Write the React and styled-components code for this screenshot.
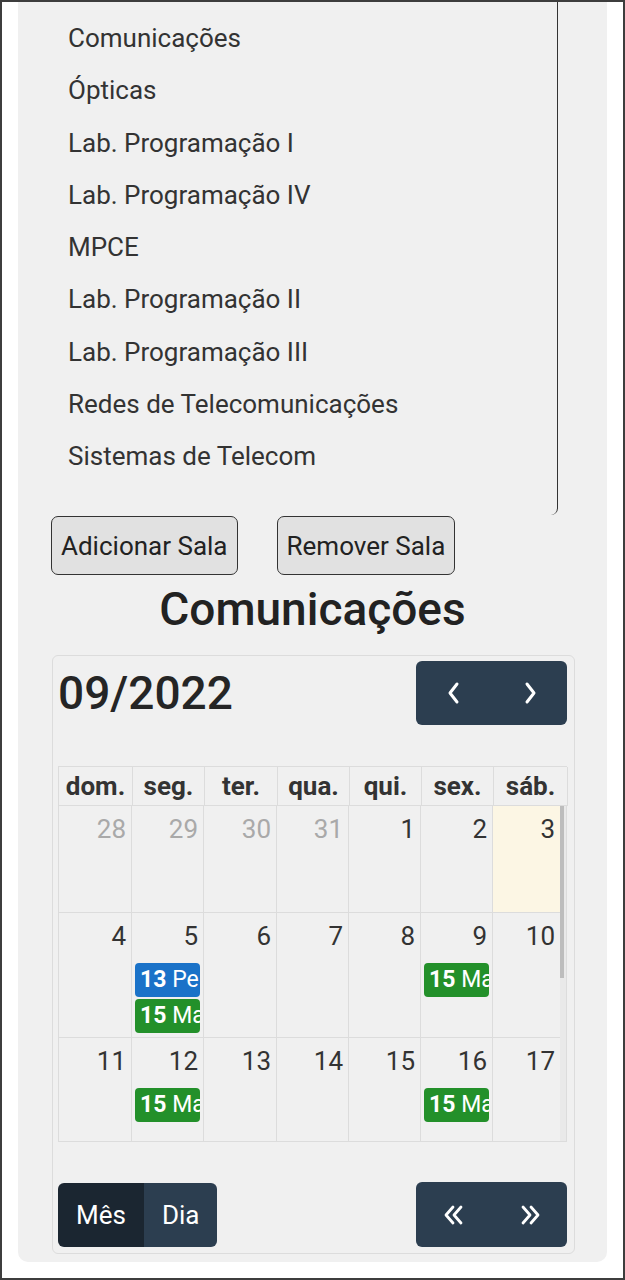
import React from "react";
import styled, { createGlobalStyle } from "styled-components";

const GlobalStyle = createGlobalStyle`
  html, body { margin: 0; padding: 0; background: #ffffff; }
  body { font-family: Roboto, "Noto Sans", "Liberation Sans", sans-serif; }
  * { box-sizing: border-box; }
`;

const Frame = styled.div`
  width: 625px;
  height: 1280px;
  border: 2px solid #3d3d3d;
  background: #ffffff;
  padding: 0 16px;
  overflow: hidden;
`;

const Panel = styled.main`
  background: #f0f0f0;
  border-radius: 0 0 10px 10px;
  padding-bottom: 8px;
  display: flex;
  flex-direction: column;
`;

const RoomList = styled.ul`
  list-style: none;
  margin: 0;
  width: 540px;
  height: 513px;
  padding: 10px 0 0 50px;
  border-right: 1px solid #333;
  border-bottom-right-radius: 7px;
`;

const RoomItem = styled.li`
  height: 52.25px;
  line-height: 52.25px;
  font-size: 26px;
  color: #333;
`;

const ButtonRow = styled.div`
  display: flex;
  gap: 39px;
  padding-left: 33px;
  margin-top: 1px;
`;

const PlainButton = styled.button`
  height: 59px;
  padding: 0 9px;
  font-family: inherit;
  font-size: 26px;
  color: #222;
  background: #e1e1e1;
  border: 1px solid #333;
  border-radius: 7px;
`;

const RoomTitle = styled.h2`
  margin: 8px 0 19px;
  text-align: center;
  font-size: 46px;
  line-height: 53px;
  font-weight: 500;
  color: #222;
`;

const Calendar = styled.section`
  margin: 0 32px 0 34px;
  border: 1px solid #dcdcdc;
  border-radius: 6px;
  padding: 5px 7px 6px 5px;
`;

const Toolbar = styled.div`
  display: flex;
  align-items: center;
  justify-content: space-between;
  margin-top: ${(p) => p.$top || 0}px;
`;

const MonthTitle = styled.h1`
  margin: 0;
  font-size: 46px;
  font-weight: 500;
  color: #252525;
`;

const Group = styled.div`
  display: flex;
  border-radius: 6px;
  overflow: hidden;
`;

const CalButton = styled.button`
  height: ${(p) => p.$h || 64}px;
  width: ${(p) => (p.$w ? `${p.$w}px` : "auto")};
  padding: 0 ${(p) => (p.$w ? 0 : 18)}px;
  border: none;
  background: ${(p) => (p.$active ? "#1b2631" : "#2c3e50")};
  color: #fff;
  font-family: inherit;
  font-size: 26px;
  display: flex;
  align-items: center;
  justify-content: center;
`;

const cols = "74px 72px 73px 72px 72px 72px 74px";

const HeadRow = styled.div`
  display: grid;
  grid-template-columns: ${cols};
  margin-top: 41px;
  border-top: 1px solid #dcdcdc;
  border-left: 1px solid #dcdcdc;
`;

const HeadCell = styled.div`
  height: 39px;
  line-height: 39px;
  text-align: center;
  font-size: 26px;
  font-weight: 700;
  color: #333;
  border-right: 1px solid #dcdcdc;
  border-bottom: 1px solid #dcdcdc;
`;

const Body = styled.div`
  position: relative;
  border-left: 1px solid #dcdcdc;
  border-right: 1px solid #dcdcdc;
  border-bottom: 1px solid #dcdcdc;
  padding-right: 6px;
  height: 336px;
  overflow: hidden;
`;

const Week = styled.div`
  display: grid;
  grid-template-columns: 73px 72px 73px 72px 72px 72px 67px;
  height: ${(p) => p.$h}px;
`;

const DayCell = styled.div`
  border-right: ${(p) => (p.$last ? "none" : "1px solid #dcdcdc")};
  border-bottom: 1px solid #dcdcdc;
  background: ${(p) => (p.$today ? "#fcf6e4" : "transparent")};
  padding: 4px 0 0;
  min-width: 0;
`;

const DayNum = styled.div`
  text-align: right;
  padding-right: 5px;
  font-size: 26px;
  line-height: 39px;
  color: ${(p) => (p.$other ? "#a9a9a9" : "#333")};
`;

const Event = styled.div`
  margin: ${(p) => (p.$first ? 7 : 2)}px 3px 0 3px;
  height: 34px;
  line-height: 34px;
  padding: 0 0 0 5px;
  border-radius: 4px;
  background: ${(p) => p.$color};
  color: #fff;
  font-size: 23px;
  white-space: nowrap;
  overflow: hidden;
  b { font-weight: 700; }
`;

const ScrollTrack = styled.div`
  position: absolute;
  top: 0;
  right: 0;
  width: 6px;
  height: 100%;
  background: #e9e9e9;
`;

const ScrollThumb = styled.div`
  width: 4px;
  height: 172px;
  background: #bdbdbd;
`;

const Chevron = ({ dir, double }) => {
  const single = dir === "left" ? "M11 3 L4 12 L11 21" : "M5 3 L12 12 L5 21";
  if (!double) {
    return (
      <svg width="16" height="24" viewBox="0 0 16 24">
        <path d={single} fill="none" stroke="#fff" strokeWidth="3" strokeLinecap="round" strokeLinejoin="round" />
      </svg>
    );
  }
  const d =
    dir === "left"
      ? "M10 3 L3 11 L10 19 M18 3 L11 11 L18 19"
      : "M4 3 L11 11 L4 19 M12 3 L19 11 L12 19";
  return (
    <svg width="22" height="22" viewBox="0 0 22 22">
      <path d={d} fill="none" stroke="#fff" strokeWidth="2.8" strokeLinecap="round" strokeLinejoin="round" />
    </svg>
  );
};

const rooms = [
  "Comunicações",
  "Ópticas",
  "Lab. Programação I",
  "Lab. Programação IV",
  "MPCE",
  "Lab. Programação II",
  "Lab. Programação III",
  "Redes de Telecomunicações",
  "Sistemas de Telecom",
];

const days = ["dom.", "seg.", "ter.", "qua.", "qui.", "sex.", "sáb."];

const BLUE = "#1a72c8";
const GREEN = "#23902a";

const weeks = [
  {
    h: 107,
    days: [
      { n: 28, other: true },
      { n: 29, other: true },
      { n: 30, other: true },
      { n: 31, other: true },
      { n: 1 },
      { n: 2 },
      { n: 3, today: true },
    ],
  },
  {
    h: 125,
    days: [
      { n: 4 },
      {
        n: 5,
        events: [
          { t: "13", title: "Pe", c: BLUE },
          { t: "15", title: "Ma", c: GREEN },
        ],
      },
      { n: 6 },
      { n: 7 },
      { n: 8 },
      { n: 9, events: [{ t: "15", title: "Ma", c: GREEN }] },
      { n: 10 },
    ],
  },
  {
    h: 104,
    days: [
      { n: 11 },
      { n: 12, events: [{ t: "15", title: "Ma", c: GREEN }] },
      { n: 13 },
      { n: 14 },
      { n: 15 },
      { n: 16, events: [{ t: "15", title: "Ma", c: GREEN }] },
      { n: 17 },
    ],
  },
];

export default function App() {
  return (
    <>
      <GlobalStyle />
      <Frame>
        <Panel>
          <RoomList>
            {rooms.map((r) => (
              <RoomItem key={r}>{r}</RoomItem>
            ))}
          </RoomList>
          <ButtonRow>
            <PlainButton>Adicionar Sala</PlainButton>
            <PlainButton>Remover Sala</PlainButton>
          </ButtonRow>
          <RoomTitle>Comunicações</RoomTitle>
          <Calendar>
            <Toolbar>
              <MonthTitle>09/2022</MonthTitle>
              <Group>
                <CalButton $w={76}>
                  <Chevron dir="left" />
                </CalButton>
                <CalButton $w={75}>
                  <Chevron dir="right" />
                </CalButton>
              </Group>
            </Toolbar>
            <HeadRow>
              {days.map((d) => (
                <HeadCell key={d}>{d}</HeadCell>
              ))}
            </HeadRow>
            <Body>
              {weeks.map((w, wi) => (
                <Week key={wi} $h={w.h}>
                  {w.days.map((d, di) => (
                    <DayCell key={di} $today={d.today} $last={di === 6}>
                      <DayNum $other={d.other}>{d.n}</DayNum>
                      {(d.events || []).map((e, ei) => (
                        <Event key={ei} $color={e.c} $first={ei === 0}>
                          <b>{e.t}</b> {e.title}
                        </Event>
                      ))}
                    </DayCell>
                  ))}
                </Week>
              ))}
              <ScrollTrack>
                <ScrollThumb />
              </ScrollTrack>
            </Body>
            <Toolbar $top={40}>
              <Group>
                <CalButton $active>Mês</CalButton>
                <CalButton>Dia</CalButton>
              </Group>
              <Group>
                <CalButton $w={76} $h={65}>
                  <Chevron dir="left" double />
                </CalButton>
                <CalButton $w={75} $h={65}>
                  <Chevron dir="right" double />
                </CalButton>
              </Group>
            </Toolbar>
          </Calendar>
        </Panel>
      </Frame>
    </>
  );
}
